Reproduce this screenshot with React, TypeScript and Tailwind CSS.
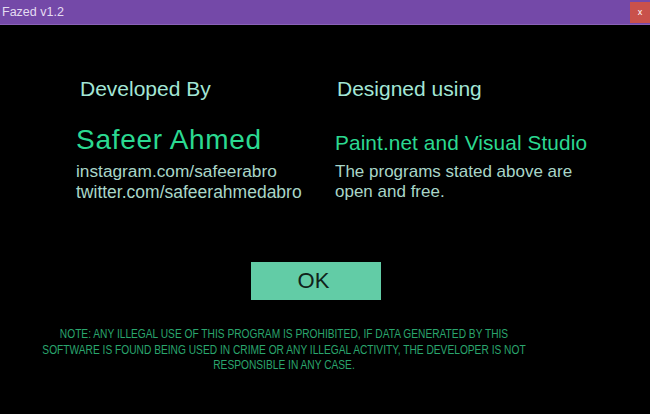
import React from 'react';

const sans = "font-['Liberation_Sans',Arial,sans-serif]";

const App: React.FC = () => {
    return (
        <div className={`w-[650px] h-[414px] bg-black flex flex-col overflow-hidden ${sans}`}>
            <header className="h-[25px] shrink-0 bg-[#7449a8] border-b border-[#8a62b8] flex items-stretch justify-between">
                <span className="pl-[2px] pt-[5px] text-[12.5px] leading-[14px] text-[#e4dcf2]">Fazed v1.2</span>
                <button className="mt-[2px] mb-[1px] w-[20px] bg-[#c9514b] text-white text-[9px] leading-none flex items-center justify-center">x</button>
            </header>

            <div className="flex pl-[76px] pt-[52px]">
                <div className="w-[259px]">
                    <h2 className="pl-[4px] text-[21px] leading-[24px] text-[#a3e6d6]">Developed By</h2>
                    <p className="mt-[23px] text-[28px] leading-[32px] tracking-[0.7px] text-[#2bd991]">Safeer Ahmed</p>
                    <p className="mt-[5px] text-[17.3px] leading-[21px] text-[#a9d6c8]">instagram.com/safeerabro</p>
                    <p className="text-[17.5px] leading-[21px] text-[#a9d6c8]">twitter.com/safeerahmedabro</p>
                </div>
                <div className="flex-1">
                    <h2 className="pl-[2px] text-[21px] leading-[24px] text-[#a3e6d6]">Designed using</h2>
                    <p className="mt-[30px] text-[20.8px] leading-[24px] tracking-[0.1px] text-[#2bd991]">Paint.net and Visual Studio</p>
                    <p className="mt-[7px] text-[17px] leading-[20px] text-[#a9d6c8] w-[250px]">The programs stated above are open and free.</p>
                </div>
            </div>

            <div className="flex mt-[59px] ml-[251px]">
                <button className="w-[130px] h-[38px] pr-[5px] bg-[#62cca6] text-[#10221a] text-[22px] leading-none">OK</button>
            </div>

            <div className="mt-[27px] w-[568px] flex justify-center">
                <p className="shrink-0 w-[580px] scale-x-[0.85] text-center uppercase text-[12px] leading-[15.5px] text-[#2aa66e]">
                    NOTE: ANY ILLEGAL USE OF THIS PROGRAM IS PROHIBITED, IF DATA GENERATED BY THIS SOFTWARE IS FOUND BEING USED IN CRIME OR ANY ILLEGAL ACTIVITY, THE DEVELOPER IS NOT RESPONSIBLE IN ANY CASE.
                </p>
            </div>
        </div>
    );
};

export default App;
